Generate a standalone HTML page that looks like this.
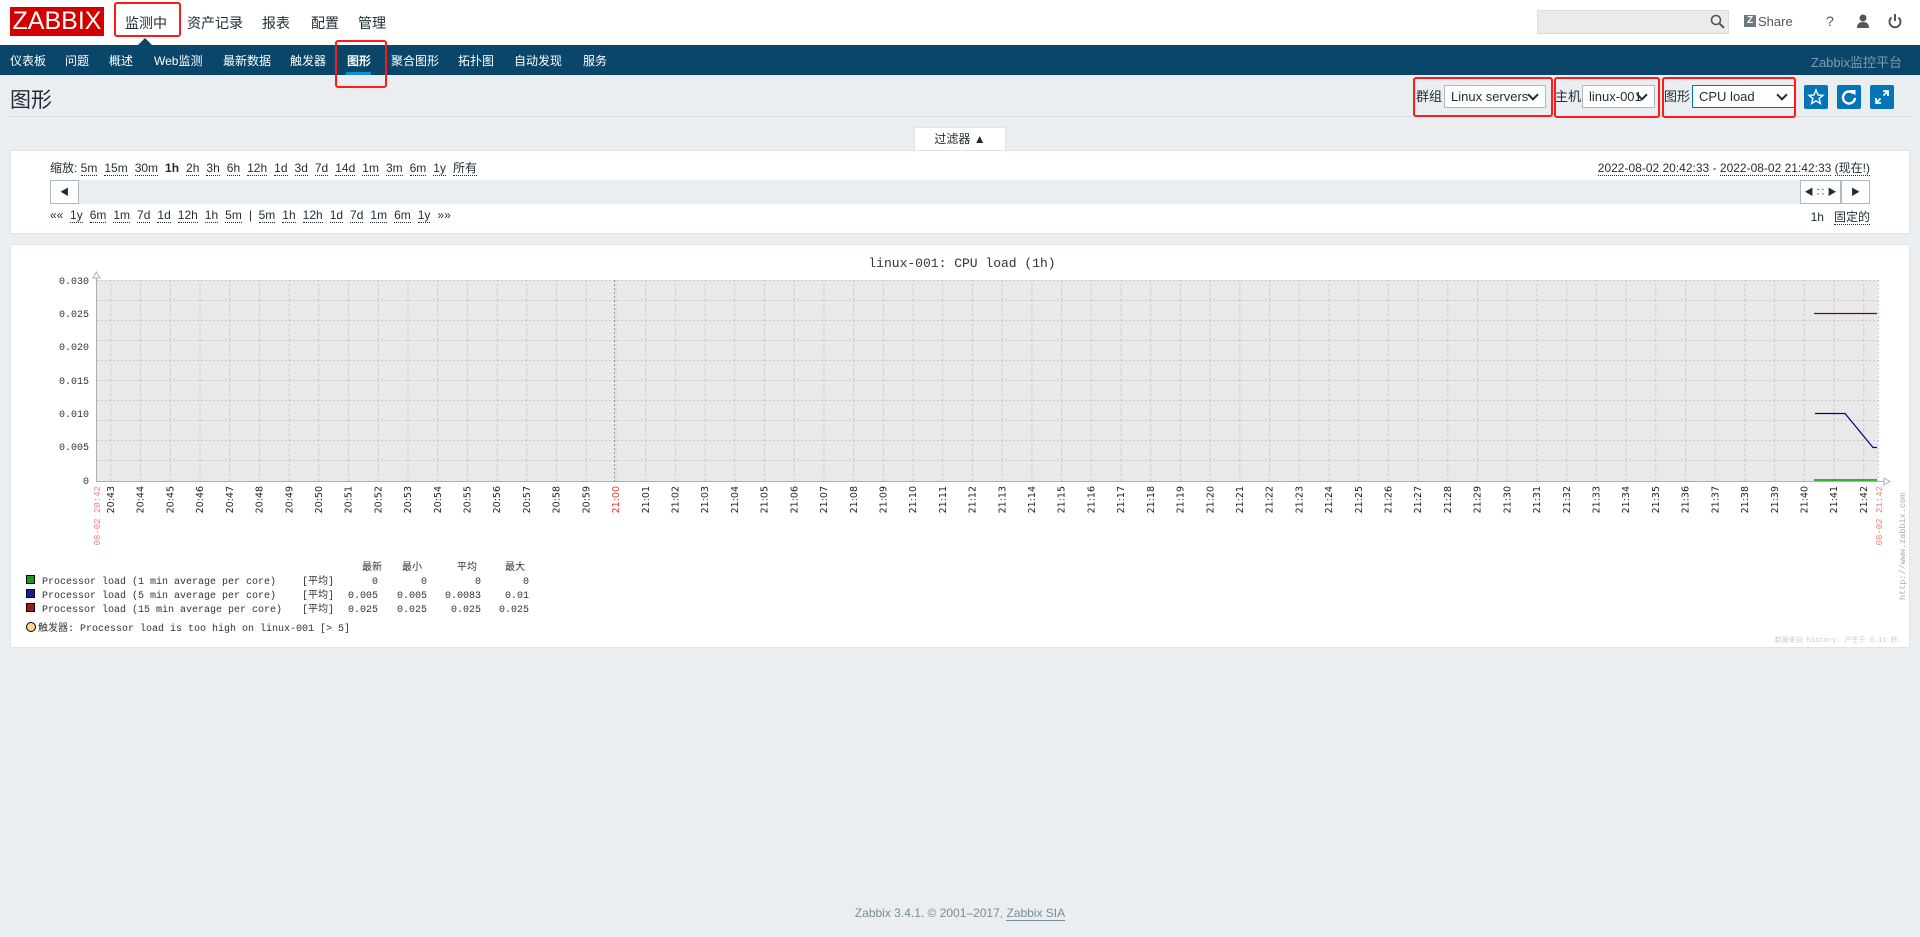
<!DOCTYPE html>
<html><head><meta charset="utf-8"><style>
*{margin:0;padding:0;box-sizing:border-box}
body{width:1920px;height:937px;background:#ebeef0;font-family:"Liberation Sans","Noto Sans CJK SC",sans-serif;color:#1f2c33;position:relative;overflow:hidden;font-size:12px}
.abs{position:absolute}
.top{position:absolute;left:0;top:0;width:1920px;height:45px;background:#fff}
.logo{position:absolute;left:10px;top:7px;width:94px;height:29px;background:#d40000;color:#fff;font-size:25px;line-height:29px;text-align:center;letter-spacing:0px}
.tm{position:absolute;top:13px;font-size:14px;color:#1f2c33}
.nav{position:absolute;left:0;top:45px;width:1920px;height:30px;background:#0a466a}
.nv{position:absolute;top:7px;font-size:12px;color:#fff}
.red{position:absolute;border:2.5px solid #ff1a1a;border-radius:3px}
.sel{position:absolute;top:85px;height:23px;border:1px solid #acbbc2;background:#fff;font-size:13px;line-height:21px;padding-left:6px}
.sel:after{content:"";position:absolute;right:8px;top:5px;width:6px;height:6px;border-right:2px solid #1f2c33;border-bottom:2px solid #1f2c33;transform:rotate(45deg)}
.lab{position:absolute;top:85px;font-size:13px;line-height:23px}
.btn{position:absolute;top:85px;width:24px;height:24px;background:#0275b8;border-radius:2px}
.lnk{border-bottom:1px dotted #1f2c33;margin-right:7px}
.box{position:absolute;background:#fff;border:1px solid #dfe4e7}
</style></head><body>
<div class="top">
<div class="logo">ZABBIX</div>
<div class="tm" style="left:125px">监测中</div>
<div class="tm" style="left:187px">资产记录</div>
<div class="tm" style="left:262px">报表</div>
<div class="tm" style="left:311px">配置</div>
<div class="tm" style="left:358px">管理</div>
<div class="abs" style="left:138px;top:38px;width:0;height:0;border-left:7px solid transparent;border-right:7px solid transparent;border-bottom:7px solid #0a466a"></div>
<div class="abs" style="left:1537px;top:10px;width:192px;height:24px;background:#ebebeb;border:1px solid #dcdcdc"></div>
<svg class="abs" style="left:1710px;top:14px" width="16" height="16"><circle cx="6" cy="6" r="4.5" stroke="#555" stroke-width="1.6" fill="none"/><line x1="9.5" y1="9.5" x2="14" y2="14" stroke="#555" stroke-width="2"/></svg>
<div class="abs" style="left:1744px;top:15px;width:12px;height:12px;background:#6c7a82;color:#fff;font-size:10px;font-weight:bold;line-height:12px;text-align:center">Z</div>
<div class="abs" style="left:1758px;top:14px;font-size:13px;color:#555">Share</div>
<div class="abs" style="left:1826px;top:13px;font-size:14px;color:#555">?</div>
<svg class="abs" style="left:1855px;top:13px" width="16" height="16"><circle cx="8" cy="5" r="3.5" fill="#555"/><path d="M2 15 Q2 9 8 9 Q14 9 14 15Z" fill="#555"/></svg>
<svg class="abs" style="left:1887px;top:13px" width="16" height="16"><path d="M4.5 4.5 A5.5 5.5 0 1 0 11.5 4.5" stroke="#555" stroke-width="2" fill="none"/><line x1="8" y1="1" x2="8" y2="8" stroke="#555" stroke-width="2"/></svg>
</div>
<div class="nav">
<div class="nv" style="left:10px">仪表板</div>
<div class="nv" style="left:65px">问题</div>
<div class="nv" style="left:109px">概述</div>
<div class="nv" style="left:154px">Web监测</div>
<div class="nv" style="left:223px">最新数据</div>
<div class="nv" style="left:290px">触发器</div>
<div class="nv" style="left:347px;font-weight:bold">图形</div>
<div class="abs" style="left:346px;top:27px;width:25px;height:3px;background:#0d8fda"></div>
<div class="nv" style="left:391px">聚合图形</div>
<div class="nv" style="left:458px">拓扑图</div>
<div class="nv" style="left:514px">自动发现</div>
<div class="nv" style="left:583px">服务</div>
<div class="nv" style="left:1811px;color:#7f9bb0;font-size:13px">Zabbix监控平台</div>
</div>
<div class="abs" style="left:10px;top:84px;font-size:21px">图形</div>
<div class="abs" style="left:10px;top:116px;width:1900px;height:1px;background:#d5dade"></div>
<div class="lab" style="left:1416px">群组</div>
<div class="sel" style="left:1444px;width:102px">Linux servers</div>
<div class="lab" style="left:1555px">主机</div>
<div class="sel" style="left:1582px;width:73px">linux-001</div>
<div class="lab" style="left:1664px">图形</div>
<div class="sel" style="left:1692px;width:103px;border-color:#0275b8">CPU load</div>
<div class="btn" style="left:1804px"><svg width="24" height="24"><path d="M12 5 L14 10 L19 10.3 L15.2 13.5 L16.4 18.5 L12 15.8 L7.6 18.5 L8.8 13.5 L5 10.3 L10 10Z" stroke="#fff" stroke-width="1.4" fill="none"/></svg></div>
<div class="btn" style="left:1837px"><svg width="24" height="24"><path d="M16.5 8.5 A6 6 0 1 0 18 13" stroke="#fff" stroke-width="2.4" fill="none"/><path d="M13 5 L18.5 5 L18.5 10.5Z" fill="#fff"/></svg></div>
<div class="btn" style="left:1870px"><svg width="24" height="24"><path d="M13 6 L18 6 L18 11 M18 6 L13.5 10.5 M11 18 L6 18 L6 13 M6 18 L10.5 13.5" stroke="#fff" stroke-width="1.8" fill="none"/></svg></div>
<div class="red" style="left:114px;top:2px;width:67px;height:35px"></div>
<div class="red" style="left:335px;top:40px;width:52px;height:48px"></div>
<div class="red" style="left:1413px;top:77px;width:140px;height:40px"></div>
<div class="red" style="left:1554px;top:77px;width:106px;height:41px"></div>
<div class="red" style="left:1662px;top:77px;width:134px;height:41px"></div>

<div class="abs" style="left:914px;top:127px;width:92px;height:24px;background:#fff;border:1px solid #dfe4e7;border-bottom:none;text-align:center;font-size:12px;line-height:22px">过滤器 ▲</div>
<div class="box" style="left:10px;top:150px;width:1900px;height:84px"></div>
<div class="abs" style="left:50px;top:159px;font-size:12px">缩放: <span class="lnk">5m</span><span class="lnk">15m</span><span class="lnk">30m</span><b style="margin-right:7px">1h</b><span class="lnk">2h</span><span class="lnk">3h</span><span class="lnk">6h</span><span class="lnk">12h</span><span class="lnk">1d</span><span class="lnk">3d</span><span class="lnk">7d</span><span class="lnk">14d</span><span class="lnk">1m</span><span class="lnk">3m</span><span class="lnk">6m</span><span class="lnk">1y</span><span class="lnk">所有</span></div>
<div class="abs" style="right:50px;top:159px;font-size:12px"><span class="lnk" style="margin:0">2022-08-02 20:42:33</span> - <span class="lnk" style="margin:0">2022-08-02 21:42:33</span> <span class="lnk" style="margin:0">(现在!)</span></div>
<div class="abs" style="left:50px;top:180px;width:1820px;height:24px;background:#ebeef0"></div>
<div class="abs" style="left:50px;top:180px;width:29px;height:24px;background:#fff;border:1px solid #acbbc2;font-size:9px;line-height:22px;text-align:center">◀</div>
<div class="abs" style="left:1800px;top:180px;width:41px;height:24px;background:#fff;border:1px solid #acbbc2;font-size:9px;line-height:22px;text-align:center">◀ ∷ ▶</div>
<div class="abs" style="left:1841px;top:180px;width:29px;height:24px;background:#fff;border:1px solid #acbbc2;font-size:9px;line-height:22px;text-align:center">▶</div>
<div class="abs" style="left:50px;top:208px;font-size:12px">«« &nbsp;<span class="lnk">1y</span><span class="lnk">6m</span><span class="lnk">1m</span><span class="lnk">7d</span><span class="lnk">1d</span><span class="lnk">12h</span><span class="lnk">1h</span><span class="lnk">5m</span>| &nbsp;<span class="lnk">5m</span><span class="lnk">1h</span><span class="lnk">12h</span><span class="lnk">1d</span><span class="lnk">7d</span><span class="lnk">1m</span><span class="lnk">6m</span><span class="lnk">1y</span>»»</div>
<div class="abs" style="right:50px;top:208px;font-size:12px">1h &nbsp;&nbsp;<span class="lnk" style="margin:0">固定的</span></div>

<div class="box" style="left:10px;top:244px;width:1900px;height:404px"></div>
<svg class="abs" style="left:0;top:0" width="1920" height="660" font-family="Liberation Mono, monospace">
<defs><pattern id="vg" x="110.4" y="0" width="29.71" height="10" patternUnits="userSpaceOnUse"><line x1="0.5" y1="0" x2="0.5" y2="10" stroke="#c5ccd2" stroke-dasharray="2,2"/></pattern></defs>
<rect x="97" y="280" width="1781" height="201" fill="#e9e9e9"/>
<rect x="97" y="280" width="1781" height="201" fill="url(#vg)"/>
<g stroke="#c5ccd2" stroke-dasharray="2,2">
<line x1="97" y1="280.5" x2="1878" y2="280.5"/><line x1="97" y1="300.5" x2="1878" y2="300.5"/><line x1="97" y1="320.5" x2="1878" y2="320.5"/><line x1="97" y1="340.5" x2="1878" y2="340.5"/><line x1="97" y1="360.5" x2="1878" y2="360.5"/><line x1="97" y1="380.5" x2="1878" y2="380.5"/><line x1="97" y1="400.5" x2="1878" y2="400.5"/><line x1="97" y1="420.5" x2="1878" y2="420.5"/><line x1="97" y1="440.5" x2="1878" y2="440.5"/><line x1="97" y1="460.5" x2="1878" y2="460.5"/><line x1="1878.5" y1="280" x2="1878.5" y2="481"/>
</g>
<line x1="614.5" y1="280" x2="614.5" y2="481" stroke="#999" stroke-dasharray="2,2"/>
<line x1="96.5" y1="273" x2="96.5" y2="482" stroke="#a8b2ba"/>
<line x1="96" y1="481.5" x2="1886" y2="481.5" stroke="#a8b2ba"/>
<path d="M93 278 L96.5 272 L100 278Z" fill="#fff" stroke="#a8b2ba"/>
<path d="M1884 478 L1890 481.5 L1884 485Z" fill="#fff" stroke="#a8b2ba"/>
<line x1="1814" y1="313.5" x2="1877" y2="313.5" stroke="#8b0000" stroke-width="1.2"/>
<polyline points="1815,413.5 1845,413.5 1873,447.5 1877,447.5" fill="none" stroke="#00008b" stroke-width="1.2"/>
<line x1="1814" y1="480" x2="1877" y2="480" stroke="#009900" stroke-width="1.5"/>
<text x="962" y="267" font-size="13" text-anchor="middle" fill="#333">linux-001: CPU load (1h)</text>
<g font-size="10" fill="#333" text-anchor="end">
<text x="89" y="284">0.030</text><text x="89" y="317">0.025</text><text x="89" y="350">0.020</text><text x="89" y="384">0.015</text><text x="89" y="417">0.010</text><text x="89" y="450">0.005</text><text x="89" y="484">0</text>
</g>
<g font-size="9.5" fill="#222" font-family="DejaVu Sans, sans-serif" text-anchor="end">
<text transform="translate(114,486) rotate(-90)">20:43</text><text transform="translate(143.7,486) rotate(-90)">20:44</text><text transform="translate(173.4,486) rotate(-90)">20:45</text><text transform="translate(203.1,486) rotate(-90)">20:46</text><text transform="translate(232.8,486) rotate(-90)">20:47</text><text transform="translate(262.6,486) rotate(-90)">20:48</text><text transform="translate(292.3,486) rotate(-90)">20:49</text><text transform="translate(322,486) rotate(-90)">20:50</text><text transform="translate(351.7,486) rotate(-90)">20:51</text><text transform="translate(381.4,486) rotate(-90)">20:52</text><text transform="translate(411.1,486) rotate(-90)">20:53</text><text transform="translate(440.8,486) rotate(-90)">20:54</text><text transform="translate(470.5,486) rotate(-90)">20:55</text><text transform="translate(500.2,486) rotate(-90)">20:56</text><text transform="translate(529.9,486) rotate(-90)">20:57</text><text transform="translate(559.7,486) rotate(-90)">20:58</text><text transform="translate(589.4,486) rotate(-90)">20:59</text><text transform="translate(619.1,486) rotate(-90)" fill="#e33">21:00</text><text transform="translate(648.8,486) rotate(-90)">21:01</text><text transform="translate(678.5,486) rotate(-90)">21:02</text><text transform="translate(708.2,486) rotate(-90)">21:03</text><text transform="translate(737.9,486) rotate(-90)">21:04</text><text transform="translate(767.6,486) rotate(-90)">21:05</text><text transform="translate(797.3,486) rotate(-90)">21:06</text><text transform="translate(827,486) rotate(-90)">21:07</text><text transform="translate(856.8,486) rotate(-90)">21:08</text><text transform="translate(886.5,486) rotate(-90)">21:09</text><text transform="translate(916.2,486) rotate(-90)">21:10</text><text transform="translate(945.9,486) rotate(-90)">21:11</text><text transform="translate(975.6,486) rotate(-90)">21:12</text><text transform="translate(1005.3,486) rotate(-90)">21:13</text><text transform="translate(1035,486) rotate(-90)">21:14</text><text transform="translate(1064.7,486) rotate(-90)">21:15</text><text transform="translate(1094.4,486) rotate(-90)">21:16</text><text transform="translate(1124.1,486) rotate(-90)">21:17</text><text transform="translate(1153.9,486) rotate(-90)">21:18</text><text transform="translate(1183.6,486) rotate(-90)">21:19</text><text transform="translate(1213.3,486) rotate(-90)">21:20</text><text transform="translate(1243,486) rotate(-90)">21:21</text><text transform="translate(1272.7,486) rotate(-90)">21:22</text><text transform="translate(1302.4,486) rotate(-90)">21:23</text><text transform="translate(1332.1,486) rotate(-90)">21:24</text><text transform="translate(1361.8,486) rotate(-90)">21:25</text><text transform="translate(1391.5,486) rotate(-90)">21:26</text><text transform="translate(1421.2,486) rotate(-90)">21:27</text><text transform="translate(1451,486) rotate(-90)">21:28</text><text transform="translate(1480.7,486) rotate(-90)">21:29</text><text transform="translate(1510.4,486) rotate(-90)">21:30</text><text transform="translate(1540.1,486) rotate(-90)">21:31</text><text transform="translate(1569.8,486) rotate(-90)">21:32</text><text transform="translate(1599.5,486) rotate(-90)">21:33</text><text transform="translate(1629.2,486) rotate(-90)">21:34</text><text transform="translate(1658.9,486) rotate(-90)">21:35</text><text transform="translate(1688.6,486) rotate(-90)">21:36</text><text transform="translate(1718.3,486) rotate(-90)">21:37</text><text transform="translate(1748.1,486) rotate(-90)">21:38</text><text transform="translate(1777.8,486) rotate(-90)">21:39</text><text transform="translate(1807.5,486) rotate(-90)">21:40</text><text transform="translate(1837.2,486) rotate(-90)">21:41</text><text transform="translate(1866.9,486) rotate(-90)">21:42</text>
</g>
<g font-size="9" fill="#f08080" text-anchor="end">
<text transform="translate(100,486) rotate(-90)">08-02 20:42</text>
<text transform="translate(1882,486) rotate(-90)">08-02 21:42</text>
</g>
<text transform="translate(1905,600) rotate(-90)" font-size="8.5" fill="#aaa">http://www.zabbix.com</text>
<text x="1902" y="642" font-size="7" fill="#ccc" text-anchor="end">数据来自 history. 产生于 0.11 秒.</text>
<g font-size="10" fill="#333">
<text x="362" y="570">最新</text><text x="402" y="570">最小</text><text x="457" y="570">平均</text><text x="505" y="570">最大</text>
<rect x="26.5" y="575.5" width="8" height="8" fill="#1a9a1a" stroke="#000"/>
<rect x="26.5" y="589.5" width="8" height="8" fill="#1a1aa0" stroke="#000"/>
<rect x="26.5" y="603.5" width="8" height="8" fill="#a01a1a" stroke="#000"/>
<text x="42" y="584">Processor load (1 min average per core)</text>
<text x="42" y="598">Processor load (5 min average per core)</text>
<text x="42" y="612">Processor load (15 min average per core)</text>
<text x="302" y="584">[平均]</text><text x="302" y="598">[平均]</text><text x="302" y="612">[平均]</text>
<g text-anchor="end">
<text x="378" y="584">0</text><text x="427" y="584">0</text><text x="481" y="584">0</text><text x="529" y="584">0</text>
<text x="378" y="598">0.005</text><text x="427" y="598">0.005</text><text x="481" y="598">0.0083</text><text x="529" y="598">0.01</text>
<text x="378" y="612">0.025</text><text x="427" y="612">0.025</text><text x="481" y="612">0.025</text><text x="529" y="612">0.025</text>
</g>
<circle cx="31" cy="627" r="4.5" fill="#ffd98a" stroke="#000"/>
<text x="38" y="631">触发器: Processor load is too high on linux-001   [&gt; 5]</text>
</g>
</svg>
<div class="abs" style="left:0;width:1920px;top:906px;text-align:center;font-size:12px;color:#768d99">Zabbix 3.4.1. © 2001–2017, <span style="border-bottom:1px solid #768d99">Zabbix SIA</span></div>
</body></html>
